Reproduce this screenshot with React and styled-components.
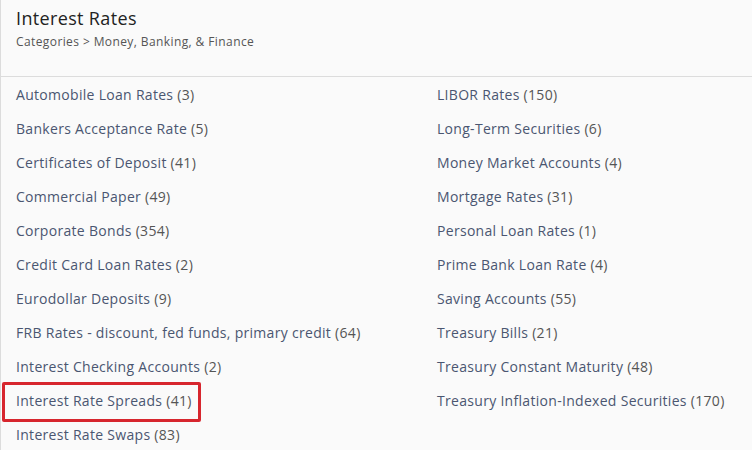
import React from 'react';
import styled, { createGlobalStyle } from 'styled-components';

const GlobalStyle = createGlobalStyle`
  html, body {
    margin: 0;
    padding: 0;
    background: #fafafa;
  }
  body {
    font-family: "Open Sans", "Liberation Sans", sans-serif;
  }
`;

const Panel = styled.div`
  width: 752px;
  height: 450px;
  box-sizing: border-box;
  border-left: 1px solid #dcdcdc;
  background: #fafafa;
  overflow: hidden;
`;

const Header = styled.div`
  padding: 6px 0 0 15px;
  height: 70px;
  border-bottom: 1px solid #dcdcdc;
`;

const Title = styled.h1`
  margin: 0;
  font-size: 18px;
  font-weight: 400;
  line-height: 24px;
  letter-spacing: 0.35px;
  color: #222;
`;

const Crumbs = styled.div`
  margin-top: 4px;
  font-size: 12px;
  line-height: 16px;
  letter-spacing: 0.4px;
  color: #555;
`;

const Columns = styled.div`
  display: grid;
  grid-template-columns: 421px 1fr;
  padding: 0 0 0 15px;
`;

const List = styled.ul`
  list-style: none;
  margin: 0;
  padding: 0;
`;

const Item = styled.li`
  position: relative;
  height: 34px;
  display: flex;
  align-items: center;
  font-size: 14px;
  letter-spacing: 0.3px;
  white-space: nowrap;
  ${({ $highlighted }) =>
    $highlighted &&
    `
    &::after {
      content: '';
      position: absolute;
      left: -14px;
      top: -1px;
      width: 193px;
      height: 34px;
      border: 3px solid #d7262e;
      border-radius: 2px;
    }
  `}
`;

const Link = styled.a`
  color: #4a5671;
  text-decoration: none;
`;

const Count = styled.span`
  color: #555;
`;

const leftItems = [
  ['Automobile Loan Rates', 3],
  ['Bankers Acceptance Rate', 5],
  ['Certificates of Deposit', 41],
  ['Commercial Paper', 49],
  ['Corporate Bonds', 354],
  ['Credit Card Loan Rates', 2],
  ['Eurodollar Deposits', 9],
  ['FRB Rates - discount, fed funds, primary credit', 64],
  ['Interest Checking Accounts', 2],
  ['Interest Rate Spreads', 41, true],
  ['Interest Rate Swaps', 83]
];

const rightItems = [
  ['LIBOR Rates', 150],
  ['Long-Term Securities', 6],
  ['Money Market Accounts', 4],
  ['Mortgage Rates', 31],
  ['Personal Loan Rates', 1],
  ['Prime Bank Loan Rate', 4],
  ['Saving Accounts', 55],
  ['Treasury Bills', 21],
  ['Treasury Constant Maturity', 48],
  ['Treasury Inflation-Indexed Securities', 170]
];

const renderList = items => (
  <List>
    {items.map(([name, count, highlighted], index) => (
      <Item key={index} $highlighted={highlighted}>
        <Link href="#">{name}</Link>
        <Count>&nbsp;({count})</Count>
      </Item>
    ))}
  </List>
);

export default function App () {
  return (
    <Panel>
      <GlobalStyle />
      <Header>
        <Title>Interest Rates</Title>
        <Crumbs>Categories &gt; Money, Banking, &amp; Finance</Crumbs>
      </Header>
      <Columns>
        {renderList(leftItems)}
        {renderList(rightItems)}
      </Columns>
    </Panel>
  );
}
